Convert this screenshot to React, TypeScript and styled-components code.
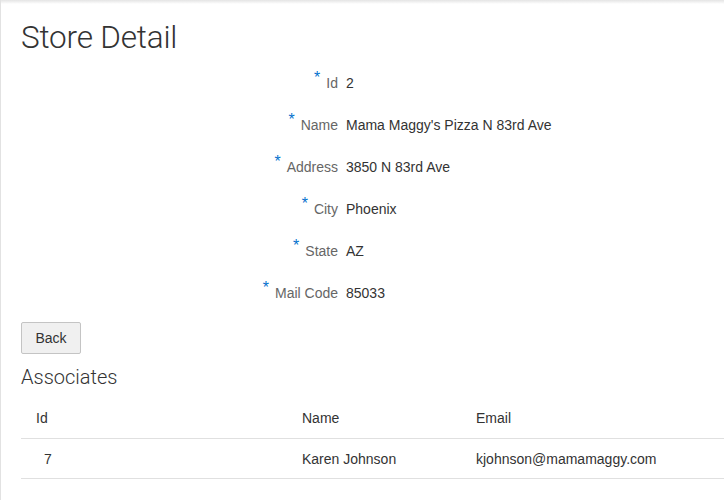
import React from "react";
import styled, { createGlobalStyle } from "styled-components";

const Global = createGlobalStyle`
  html, body { margin: 0; padding: 0; background: #fff; }
  body { font-family: "Liberation Sans", Arial, sans-serif; color: #333; }
`;

const Page = styled.div`
  min-height: 500px;
  box-sizing: border-box;
  border-left: 1px solid #e2e2e2;
  padding: 14px 0 0 20px;
  position: relative;
  overflow: hidden;
  &::before {
    content: "";
    position: absolute;
    left: 0; right: 0; top: 0;
    height: 4px;
    background: linear-gradient(#e4e4e4, rgba(255,255,255,0));
  }
`;

const Title = styled.h1`
  margin: 0;
  font-family: Roboto, "Liberation Sans", sans-serif;
  font-weight: 300;
  font-size: 31.5px;
  line-height: 48px;
  color: #333;
  letter-spacing: -0.2px;
`;

const Form = styled.div`
  display: grid;
  grid-template-columns: 317px 1fr;
  column-gap: 8px;
  grid-auto-rows: 42px;
  align-items: center;
  font-size: 14px;
`;

const Label = styled.div`
  justify-self: end;
  color: #666;
  display: flex;
  align-items: center;
`;

const Req = styled.span`
  color: #0572ce;
  font-size: 16px;
  margin-right: 6px;
  position: relative;
  top: -5px;
  line-height: 1;
`;

const Value = styled.div`
  color: #333;
`;

const Button = styled.button`
  margin-top: 8px;
  height: 32px;
  width: 60px;
  border: 1px solid #c4c4c4;
  border-radius: 2px;
  background: #f0f0f0;
  color: #333;
  font-family: "Liberation Sans", Arial, sans-serif;
  font-size: 14px;
  padding: 0;
  display: block;
`;

const SubTitle = styled.h2`
  margin: 8px 0 0;
  font-family: Roboto, "Liberation Sans", sans-serif;
  font-weight: 300;
  font-size: 20px;
  line-height: 30px;
  color: #333;
`;

const Table = styled.table`
  margin-top: 6px;
  width: calc(100% + 20px);
  table-layout: fixed;
  border-collapse: collapse;
  font-size: 14px;
  color: #333;
`;

const Th = styled.th<{ $w?: number }>`
  text-align: left;
  font-weight: normal;
  height: 40px;
  padding: 0 0 0 15px;
  border-bottom: 1px solid #e0e0e0;
  ${(p) => (p.$w ? `width: ${p.$w}px;` : "")}
`;

const Td = styled.td<{ $pad?: number }>`
  height: 39px;
  padding: 0 0 0 ${(p) => p.$pad ?? 15}px;
  border-bottom: 1px solid #e0e0e0;
`;

const fields: [string, string][] = [
  ["Id", "2"],
  ["Name", "Mama Maggy's Pizza N 83rd Ave"],
  ["Address", "3850 N 83rd Ave"],
  ["City", "Phoenix"],
  ["State", "AZ"],
  ["Mail Code", "85033"],
];

export default function App() {
  return (
    <Page>
      <Global />
      <Title>Store Detail</Title>
      <Form>
        {fields.map(([l, v]) => (
          <React.Fragment key={l}>
            <Label>
              <Req>*</Req>
              {l}
            </Label>
            <Value>{v}</Value>
          </React.Fragment>
        ))}
      </Form>
      <Button>Back</Button>
      <SubTitle>Associates</SubTitle>
      <Table>
        <thead>
          <tr>
            <Th $w={251}>Id</Th>
            <Th $w={159}>Name</Th>
            <Th>Email</Th>
          </tr>
        </thead>
        <tbody>
          <tr>
            <Td $pad={23}>7</Td>
            <Td>Karen Johnson</Td>
            <Td>kjohnson@mamamaggy.com</Td>
          </tr>
        </tbody>
      </Table>
    </Page>
  );
}
